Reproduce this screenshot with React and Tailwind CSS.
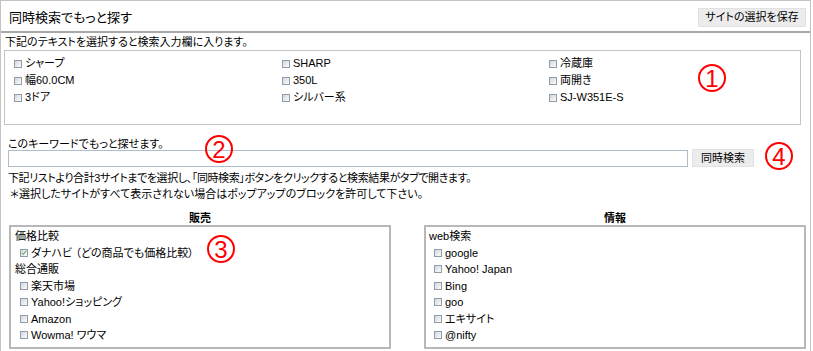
import React from "react";

function Cb({ checked }) {
  return (
    <span className="relative inline-block w-[8px] h-[8px] shrink-0 border border-[#8e9cab] bg-linear-to-br from-[#d4d8dc] to-[#fbfbfb]">
      {checked && (
        <svg viewBox="0 0 8 8" className="absolute left-0 top-0 w-[6px] h-[6px]">
          <path d="M1 4 L3 6 L7 1" stroke="#3a9a3a" strokeWidth="1.3" fill="none" />
        </svg>
      )}
    </span>
  );
}

function Item({ label, checked }) {
  return (
    <div className="flex items-center gap-[3px]">
      <Cb checked={checked} />
      <span>{label}</span>
    </div>
  );
}

function Mark({ n, className }) {
  return (
    <div
      className={
        "absolute w-[28px] h-[28px] rounded-full border-2 border-[#ff0000] text-[#ff0000] flex items-center justify-center text-[24px] leading-none font-['Liberation_Sans',sans-serif] " +
        className
      }
    >
      <span className="mt-[1px]">{n}</span>
    </div>
  );
}

export default function App() {
  const top = [
    "シャープ", "SHARP", "冷蔵庫",
    "幅60.0CM", "350L", "両開き",
    "3ドア", "シルバー系", "SJ-W351E-S",
  ];
  return (
    <div className="relative w-[813px] h-[351px] overflow-hidden bg-white text-black text-[11px] font-['Liberation_Sans','Noto_Sans_CJK_JP',sans-serif] [font-feature-settings:'palt']">
      <div className="w-[811px] h-[351px] border-x border-t border-[#c4c4c4]">
        <div className="h-[32px] flex items-center justify-between pl-[8px] pr-[4px] border-b-2 border-[#a8a8a8]">
          <span className="text-[13px] leading-none mt-[3px]">同時検索でもっと探す</span>
          <span className="h-[19px] w-[108px] flex items-center justify-center bg-[#ececec] border border-[#e2e2e2] text-[11px] mt-[2px]">
            サイトの選択を保存
          </span>
        </div>

        <div className="px-[3px]">
          <div className="pl-[1px] mt-[3px] leading-[13px]">下記のテキストを選択すると検索入力欄に入ります。</div>
          <div className="mt-[1px] w-[797px] h-[75px] border border-[#c4c4c4] pt-[4px] pl-[9px] grid grid-cols-[268px_267px_1fr] auto-rows-[17px] items-center">
            {top.map((t) => (
              <Item key={t} label={t} />
            ))}
          </div>

          <div className="pl-[4px] mt-[13px] leading-[12px]">このキーワードでもっと探せます。</div>
          <div className="pl-[4px] flex items-start gap-[4px] h-[17px]">
            <div className="w-[680px] h-[17px] border border-[#aebdcc] bg-white" />
            <div className="h-[18px] w-[62px] -mt-[1px] flex items-center justify-center bg-[#ececec] border border-[#e2e2e2]">
              同時検索
            </div>
          </div>

          <div className="pl-[4px] mt-[3px] leading-[16px]">
            <div className="tracking-[-0.4px]">下記リストより合計3サイトまでを選択し、「同時検索」ボタンをクリックすると検索結果がタブで開きます。</div>
            <div className="pl-[2px]">＊選択したサイトがすべて表示されない場合はポップアップのブロックを許可して下さい。</div>
          </div>

          <div className="mt-[10px] ml-[5px] flex gap-[33px]">
            <div className="w-[382px]">
              <div className="h-[13px] leading-[13px] text-center font-bold">販売</div>
              <div className="h-[124px] border-2 border-[#b8b8b8] pt-[1px] flex flex-col">
                <div className="h-[16.5px] flex items-center pl-[4px]">価格比較</div>
                <div className="h-[16.5px] flex items-center pl-[9px]"><Item label="ダナハビ （どの商品でも価格比較）" checked /></div>
                <div className="h-[16.5px] flex items-center pl-[4px]">総合通販</div>
                <div className="h-[16.5px] flex items-center pl-[9px]"><Item label="楽天市場" /></div>
                <div className="h-[16.5px] flex items-center pl-[9px]"><Item label="Yahoo!ショッピング" /></div>
                <div className="h-[16.5px] flex items-center pl-[9px]"><Item label="Amazon" /></div>
                <div className="h-[16.5px] flex items-center pl-[9px]"><Item label="Wowma! ワウマ" /></div>
              </div>
            </div>
            <div className="w-[382px]">
              <div className="h-[13px] leading-[13px] text-center font-bold">情報</div>
              <div className="h-[124px] border-2 border-[#b8b8b8] pt-[1px] flex flex-col">
                <div className="h-[16.5px] flex items-center pl-[3px]">web検索</div>
                <div className="h-[16.5px] flex items-center pl-[8px]"><Item label="google" /></div>
                <div className="h-[16.5px] flex items-center pl-[8px]"><Item label="Yahoo! Japan" /></div>
                <div className="h-[16.5px] flex items-center pl-[8px]"><Item label="Bing" /></div>
                <div className="h-[16.5px] flex items-center pl-[8px]"><Item label="goo" /></div>
                <div className="h-[16.5px] flex items-center pl-[8px]"><Item label="エキサイト" /></div>
                <div className="h-[16.5px] flex items-center pl-[8px]"><Item label="@nifty" /></div>
              </div>
            </div>
          </div>
        </div>
      </div>

      <Mark n="1" className="left-[698px] top-[64px]" />
      <Mark n="2" className="left-[205px] top-[135px]" />
      <Mark n="3" className="left-[207px] top-[235px]" />
      <Mark n="4" className="left-[765px] top-[142px]" />
    </div>
  );
}
